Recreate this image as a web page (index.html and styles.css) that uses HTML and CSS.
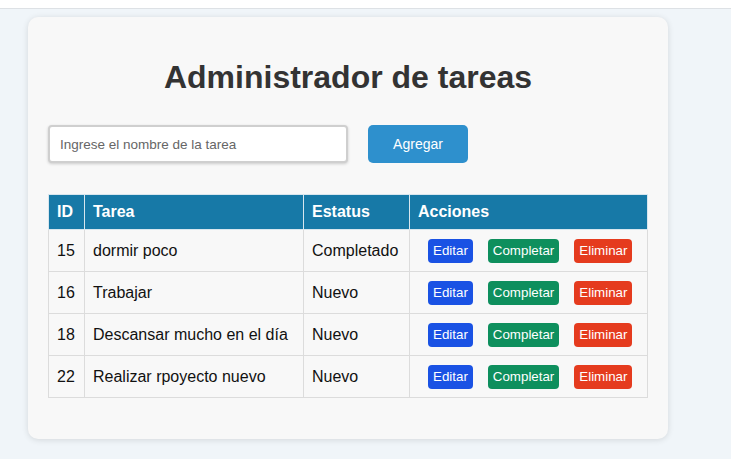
FILE: index.html
```html
<!DOCTYPE html>
<html lang="es">
<head>
<meta charset="utf-8">
<title>Administrador de tareas</title>
<link rel="stylesheet" href="styles.css">
</head>
<body>
<div class="topbar"></div>
<main class="card">
  <h1 class="title">Administrador de tareas</h1>
  <div class="add-row">
    <input class="task-input" type="text" placeholder="Ingrese el nombre de la tarea">
    <button class="add-btn">Agregar</button>
  </div>
  <table class="tasks">
    <colgroup>
      <col class="c-id"><col class="c-task"><col class="c-status"><col class="c-actions">
    </colgroup>
    <thead>
      <tr><th>ID</th><th>Tarea</th><th>Estatus</th><th>Acciones</th></tr>
    </thead>
    <tbody>
      <tr><td>15</td><td>dormir poco</td><td>Completado</td><td><div class="actions"><button class="btn edit">Editar</button><button class="btn done">Completar</button><button class="btn del">Eliminar</button></div></td></tr>
      <tr><td>16</td><td>Trabajar</td><td>Nuevo</td><td><div class="actions"><button class="btn edit">Editar</button><button class="btn done">Completar</button><button class="btn del">Eliminar</button></div></td></tr>
      <tr><td>18</td><td>Descansar mucho en el día</td><td>Nuevo</td><td><div class="actions"><button class="btn edit">Editar</button><button class="btn done">Completar</button><button class="btn del">Eliminar</button></div></td></tr>
      <tr><td>22</td><td>Realizar rpoyecto nuevo</td><td>Nuevo</td><td><div class="actions"><button class="btn edit">Editar</button><button class="btn done">Completar</button><button class="btn del">Eliminar</button></div></td></tr>
    </tbody>
  </table>
</main>
</body>
</html>
```
FILE: styles.css
```css
html, body {
  margin: 0;
  padding: 0;
}
body {
  background: #f0f5f9;
  font-family: "Liberation Sans", Arial, sans-serif;
  color: #111;
  height: 459px;
  overflow: hidden;
}
.topbar {
  height: 8px;
  background: #ffffff;
  border-bottom: 1px solid #dde1e5;
}
.card {
  width: 600px;
  margin: 8px 0 0 28px;
  padding: 20px 20px 41px;
  background: #f8f8f8;
  border-radius: 10px;
  box-shadow: 0 1px 6px rgba(0, 0, 0, 0.12);
}
.title {
  margin: 22px 0 29px;
  text-align: center;
  font-size: 32px;
  line-height: 37px;
  font-weight: bold;
  color: #333;
}
.add-row {
  display: flex;
  align-items: center;
  gap: 20px;
  margin-bottom: 31px;
}
.task-input {
  box-sizing: border-box;
  width: 300px;
  height: 38px;
  padding: 0 10px;
  border: 2px solid #cfcfcf;
  border-radius: 4px;
  background: #fff;
  box-shadow: 0 1px 3px rgba(0, 0, 0, 0.18);
  font-family: "Liberation Sans", Arial, sans-serif;
  font-size: 13.5px;
  color: #333;
}
.task-input::placeholder {
  color: #666;
}
.add-btn {
  width: 100px;
  height: 38px;
  border: none;
  border-radius: 5px;
  background: #2e90cd;
  color: #fff;
  font-family: "Liberation Sans", Arial, sans-serif;
  font-size: 14px;
}
.tasks {
  width: 599px;
  border-collapse: collapse;
  table-layout: fixed;
  font-size: 16px;
}
.c-id { width: 36px; }
.c-task { width: 219px; }
.c-status { width: 106px; }
.c-actions { width: 238px; }
.tasks th, .tasks td {
  border: 1px solid #dcdcdc;
  padding: 0 8px;
  text-align: left;
  white-space: nowrap;
}
.tasks thead tr {
  height: 35px;
}
.tasks th {
  background: #1779a7;
  color: #fff;
  font-weight: bold;
  border-color: #d8e6ee;
}
.tasks tbody tr {
  height: 42px;
}
.tasks td {
  color: #111;
  background: #f8f8f8;
}
.actions {
  display: flex;
  gap: 15px;
  padding-left: 10px;
}
.btn {
  border: none;
  border-radius: 4px;
  padding: 4px 5px;
  line-height: 16px;
  font-family: "Liberation Sans", Arial, sans-serif;
  font-size: 13.33px;
  color: #fff;
}
.btn.edit { background: #1a52e4; }
.btn.done { background: #0e8f5d; }
.btn.del { background: #e53b1e; }
```
